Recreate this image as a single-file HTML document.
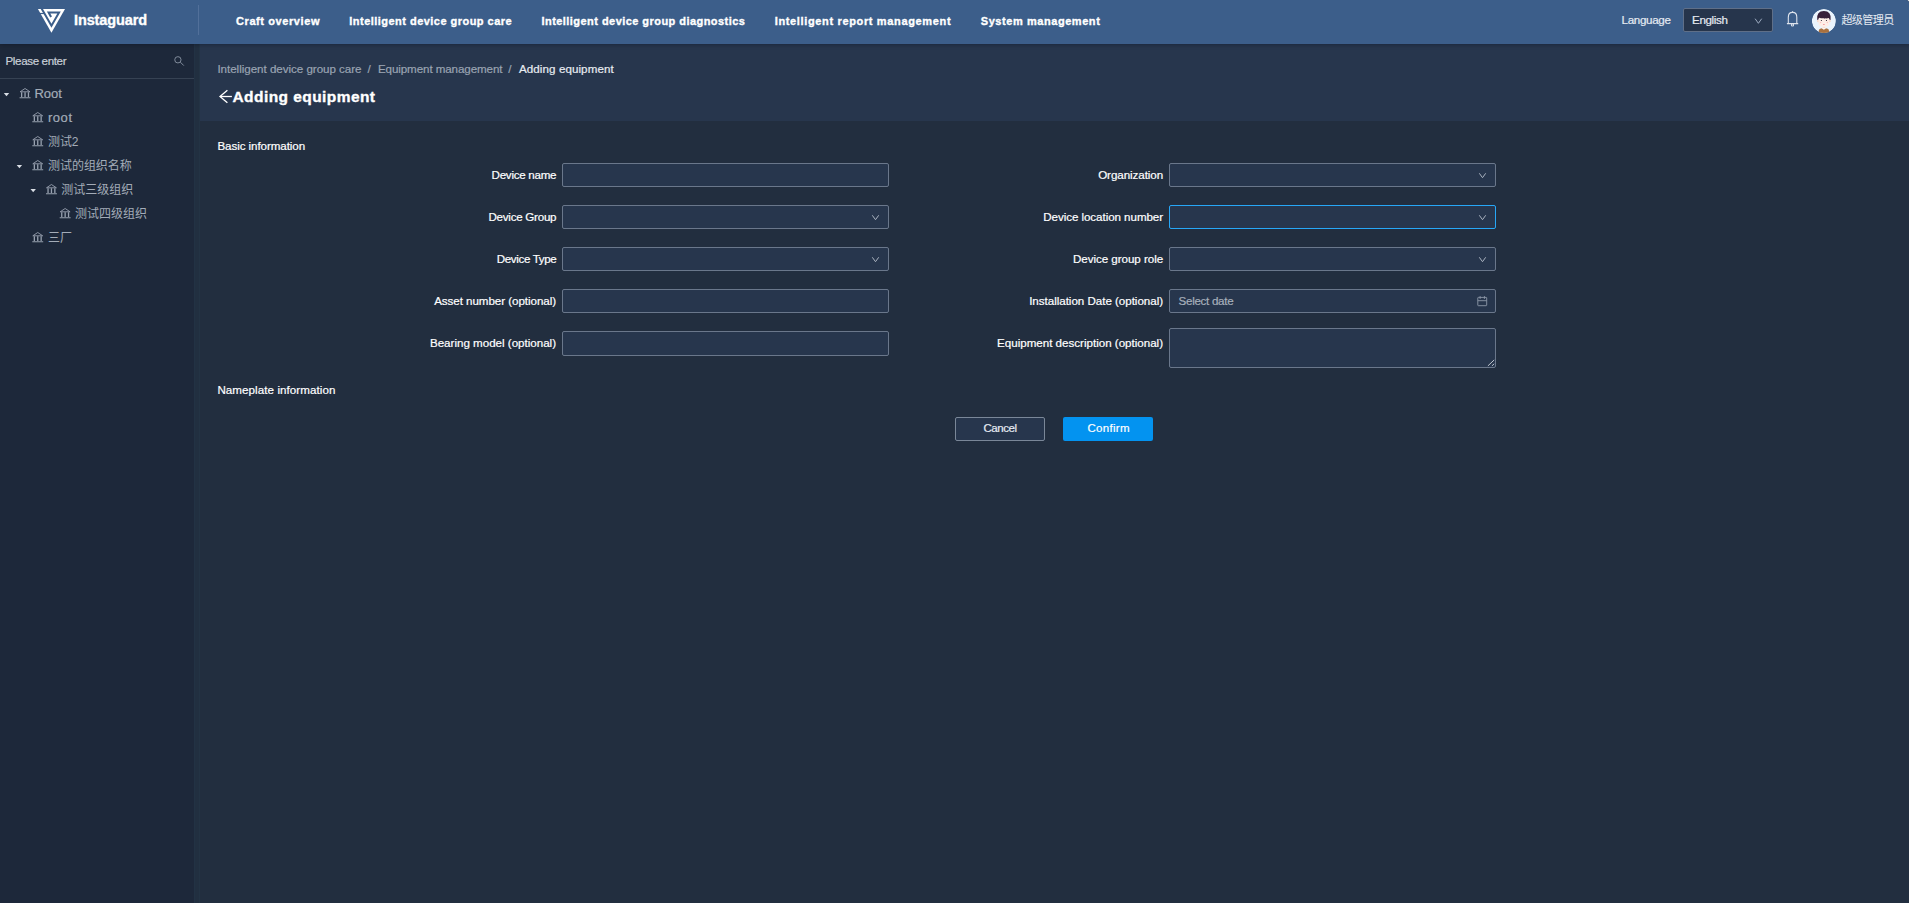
<!DOCTYPE html>
<html lang="en">
<head>
<meta charset="utf-8">
<title>Instaguard - Adding equipment</title>
<style>
html,body{margin:0;padding:0;}
body{width:1910px;height:903px;overflow:hidden;position:relative;background:#fff;
 font-family:"Liberation Sans","Noto Sans CJK SC",sans-serif;}
.abs,.t,.box{position:absolute;}
.t{-webkit-text-stroke:0.2px currentColor;z-index:4;white-space:pre;line-height:20px;height:20px;}
#app{position:absolute;left:0;top:0;width:1909px;height:903px;background:#222e3f;overflow:hidden;border-top-right-radius:3px;}
#hdr{left:0;top:0;width:1909px;height:44px;background:#3c5e8a;box-shadow:0 1px 4px rgba(0,10,25,.32);z-index:2;}
#side{left:0;top:44px;width:194px;height:859px;background:#1d283a;}
#gap{left:194px;top:44px;width:6px;height:859px;background:#212f40;box-sizing:border-box;border-left:1px solid #223244;border-right:1px solid #233344;}
#phdr{left:200px;top:44px;width:1709px;height:77px;background:#27364d;}
#sline{left:0;top:78px;width:194px;height:1px;background:#364253;}
#vdiv{z-index:3;left:198px;top:5px;width:1px;height:30px;background:#52709a;}
.in{z-index:3;position:absolute;box-sizing:border-box;border:1px solid #6a778b;border-radius:2px;background:#27364d;}
.in.focus{border-color:#27a7f7;}
.hv{-webkit-text-stroke:0.35px currentColor;}
.btn{position:absolute;box-sizing:border-box;border-radius:2px;}
svg{position:absolute;overflow:visible;}
.ns{-webkit-text-stroke:0;}

</style>
</head>
<body>
<div id="app">
<div class="box" id="hdr"></div>
<div class="box" id="side"></div>
<div class="box" id="gap"></div>
<div class="box" id="phdr"></div>
<div class="box" id="sline"></div>
<div class="box" id="vdiv"></div>
<!-- inputs left -->
<div class="in" style="left:562px;top:163px;width:327px;height:24px"></div>
<div class="in" style="left:562px;top:205px;width:327px;height:24px"></div>
<div class="in" style="left:562px;top:247px;width:327px;height:24px"></div>
<div class="in" style="left:562px;top:289px;width:327px;height:24px"></div>
<div class="in" style="left:562px;top:331px;width:327px;height:25px"></div>
<!-- inputs right -->
<div class="in" style="left:1169px;top:163px;width:327px;height:24px"></div>
<div class="in focus" style="left:1169px;top:205px;width:327px;height:24px"></div>
<div class="in" style="left:1169px;top:247px;width:327px;height:24px"></div>
<div class="in" style="left:1169px;top:289px;width:327px;height:24px"></div>
<div class="in" style="left:1169px;top:328px;width:327px;height:40px"></div>
<!-- language select -->
<div class="in" style="left:1683px;top:8px;width:90px;height:24px;background:#26354c;border-color:#5f6f88"></div>
<!-- buttons -->
<div class="btn" style="left:955px;top:417px;width:90px;height:24px;border:1px solid #7a8798;background:#27364d"></div>
<div class="btn" style="left:1063px;top:417px;width:90px;height:24px;background:#0393f0"></div>
<svg class="abs" style="left:0;top:0;z-index:3" width="1909" height="903" viewBox="0 0 1909 903"><g id="logo"><polygon points="37.9,9.1 65,9.1 51.45,32.7" fill="#fff"/><polyline points="41.44,8.3 51.45,25.8 59.06,12.5 48.6,12.5 51.1,17" fill="none" stroke="#3c5e8a" stroke-width="2" stroke-linejoin="miter" stroke-miterlimit="8"/><line x1="36" y1="13.5" x2="44.6" y2="13.5" stroke="#3c5e8a" stroke-width="1.2"/></g>
<polyline points="1755.1,18.7 1758.4,23.3 1761.7,18.7" fill="none" stroke="#9dabc0" stroke-width="1"/>
<g fill="none" stroke="#dde3ec" stroke-width="1.1"><path d="M1788.3 23.4 V17.3 C1788.3 13.9 1790 12.4 1792.55 12.4 C1795.1 12.4 1796.8 13.9 1796.8 17.3 V23.4"/><line x1="1786.9" y1="23.6" x2="1798.2" y2="23.6"/><circle cx="1792.5" cy="24.9" r="1.1"/><line x1="1792.55" y1="11.2" x2="1792.55" y2="12.2"/></g>
<defs><clipPath id="avc"><circle cx="1823.9" cy="21" r="12"/></clipPath></defs><g clip-path="url(#avc)"><circle cx="1823.9" cy="21" r="12" fill="#eaf4fd"/><path d="M1818.8 34 v-3.2 q0 -2 2 -2.3 l3.1 -0.4 l3.1 0.4 q2 0.3 2 2.3 v3.2z" fill="#a9713f"/><path d="M1822 28.4 l1.9 1.3 l1.9 -1.3 l-0.6 -0.9 h-2.6z" fill="#fff"/><rect x="1822.6" y="25" width="2.6" height="3.3" fill="#fbe0d4"/><ellipse cx="1818.1" cy="21" rx="1" ry="1.2" fill="#f9d3c2"/><ellipse cx="1829.7" cy="21" rx="1" ry="1.2" fill="#f9d3c2"/><path d="M1818.4 17 h11 v5.5 q0 4.6 -5.5 4.6 q-5.5 0 -5.5 -4.6z" fill="#fdeee7"/><path d="M1817.2 19.9 q-0.9 -8.8 6.7 -8.8 q7.6 0 6.7 8.8 l-1.2 -0.3 q-0.2 -1.2 -0.6 -1.6 q-1.8 0.6 -3.6 0.3 l-0.5 0.7 l-0.3 -0.7 q-3 0.2 -5.3 -0.5 q-0.5 0.6 -0.7 1.8z" fill="#38203a"/><circle cx="1821.4" cy="20.5" r="0.6" fill="#2b2330"/><circle cx="1826.5" cy="20.5" r="0.6" fill="#2b2330"/><circle cx="1820.6" cy="22.4" r="0.75" fill="#fbc4c4"/><circle cx="1827.3" cy="22.4" r="0.75" fill="#fbc4c4"/><ellipse cx="1823.9" cy="24.4" rx="0.9" ry="0.5" fill="#f58a8f"/></g>
<g fill="none" stroke="#808b9b" stroke-width="1"><circle cx="177.9" cy="59.8" r="3.15"/><line x1="180.4" y1="62.2" x2="183.8" y2="65.6"/></g>
<g transform="translate(19.6,87.9)" fill="none" stroke="#98a2b0" stroke-width="0.9"><path d="M0.5 3.9 L5.45 0.6 L10.4 3.9 Z" stroke-linejoin="round"/><path d="M2.05 4.3 V9 M5.45 4.3 V9 M8.85 4.3 V9" stroke-width="1.3"/><path d="M0 9.85 H10.9" stroke-width="1"/></g>
<polygon points="3.8,93.1 9.2,93.1 6.5,96.2" fill="#d9dee5"/>
<g transform="translate(32.3,111.9)" fill="none" stroke="#98a2b0" stroke-width="0.9"><path d="M0.5 3.9 L5.45 0.6 L10.4 3.9 Z" stroke-linejoin="round"/><path d="M2.05 4.3 V9 M5.45 4.3 V9 M8.85 4.3 V9" stroke-width="1.3"/><path d="M0 9.85 H10.9" stroke-width="1"/></g>
<g transform="translate(32.3,135.9)" fill="none" stroke="#98a2b0" stroke-width="0.9"><path d="M0.5 3.9 L5.45 0.6 L10.4 3.9 Z" stroke-linejoin="round"/><path d="M2.05 4.3 V9 M5.45 4.3 V9 M8.85 4.3 V9" stroke-width="1.3"/><path d="M0 9.85 H10.9" stroke-width="1"/></g>
<g transform="translate(32.3,159.9)" fill="none" stroke="#98a2b0" stroke-width="0.9"><path d="M0.5 3.9 L5.45 0.6 L10.4 3.9 Z" stroke-linejoin="round"/><path d="M2.05 4.3 V9 M5.45 4.3 V9 M8.85 4.3 V9" stroke-width="1.3"/><path d="M0 9.85 H10.9" stroke-width="1"/></g>
<polygon points="16.7,165.1 22.1,165.1 19.4,168.2" fill="#d9dee5"/>
<g transform="translate(46,183.9)" fill="none" stroke="#98a2b0" stroke-width="0.9"><path d="M0.5 3.9 L5.45 0.6 L10.4 3.9 Z" stroke-linejoin="round"/><path d="M2.05 4.3 V9 M5.45 4.3 V9 M8.85 4.3 V9" stroke-width="1.3"/><path d="M0 9.85 H10.9" stroke-width="1"/></g>
<polygon points="30.5,189.1 35.9,189.1 33.2,192.2" fill="#d9dee5"/>
<g transform="translate(59.7,207.9)" fill="none" stroke="#98a2b0" stroke-width="0.9"><path d="M0.5 3.9 L5.45 0.6 L10.4 3.9 Z" stroke-linejoin="round"/><path d="M2.05 4.3 V9 M5.45 4.3 V9 M8.85 4.3 V9" stroke-width="1.3"/><path d="M0 9.85 H10.9" stroke-width="1"/></g>
<g transform="translate(32.3,231.9)" fill="none" stroke="#98a2b0" stroke-width="0.9"><path d="M0.5 3.9 L5.45 0.6 L10.4 3.9 Z" stroke-linejoin="round"/><path d="M2.05 4.3 V9 M5.45 4.3 V9 M8.85 4.3 V9" stroke-width="1.3"/><path d="M0 9.85 H10.9" stroke-width="1"/></g>
<g fill="none" stroke="#fff" stroke-width="1.3"><path d="M231.9 96.5 H220.2"/><path d="M227.4 90.3 L220 96.5 L227.4 102.7" stroke-linejoin="miter"/></g>
<polyline points="872.3,215.3 875.5,219.7 878.7,215.3" fill="none" stroke="#aab3c0" stroke-width="1"/>
<polyline points="872.3,257.3 875.5,261.7 878.7,257.3" fill="none" stroke="#aab3c0" stroke-width="1"/>
<polyline points="1479.3,173.3 1482.5,177.7 1485.7,173.3" fill="none" stroke="#aab3c0" stroke-width="1"/>
<polyline points="1479.3,215.3 1482.5,219.7 1485.7,215.3" fill="none" stroke="#aab3c0" stroke-width="1"/>
<polyline points="1479.3,257.3 1482.5,261.7 1485.7,257.3" fill="none" stroke="#aab3c0" stroke-width="1"/>
<g fill="none" stroke="#8d98a8" stroke-width="0.9"><rect x="1477.8" y="297.4" width="8.9" height="8.3" rx="0.5"/><line x1="1477.8" y1="300.7" x2="1486.7" y2="300.7"/><line x1="1480.1" y1="296.1" x2="1480.1" y2="298.9"/><line x1="1484.4" y1="296.1" x2="1484.4" y2="298.9"/></g>
<g stroke="#cfd5dd" stroke-width="0.9"><line x1="1487.9" y1="365.9" x2="1494.2" y2="359.9"/><line x1="1491.9" y1="365.9" x2="1494.2" y2="363.8"/></g></svg>
</div>

<header>
<span class="t hv" style="left:74px;top:9.5px;font-size:14.5px;letter-spacing:-0.12px;color:#ffffff;font-weight:700;">Instaguard</span>
<span class="t hv" style="left:236px;top:11px;font-size:11px;letter-spacing:0.59px;color:#ffffff;font-weight:700;">Craft overview</span>
<span class="t hv" style="left:349.3px;top:11px;font-size:11px;letter-spacing:0.47px;color:#ffffff;font-weight:700;">Intelligent device group care</span>
<span class="t hv" style="left:541.5px;top:11px;font-size:11px;letter-spacing:0.45px;color:#ffffff;font-weight:700;">Intelligent device group diagnostics</span>
<span class="t hv" style="left:774.7px;top:11px;font-size:11px;letter-spacing:0.65px;color:#ffffff;font-weight:700;">Intelligent report management</span>
<span class="t hv" style="left:980.8px;top:11px;font-size:11px;letter-spacing:0.56px;color:#ffffff;font-weight:700;">System management</span>
<span class="t" style="left:1621.6px;top:10px;font-size:11.6px;letter-spacing:-0.33px;color:#e6ebf2;">Language</span>
<span class="t" style="left:1692px;top:10px;font-size:11.6px;letter-spacing:-0.34px;color:#e6ebf2;">English</span>
<span class="t ns" style="left:1841.4px;top:10px;font-size:11px;letter-spacing:-0.53px;color:#e6ebf2;">超级管理员</span>
</header>
<aside>
<span class="t" style="left:5.5px;top:51px;font-size:11.6px;letter-spacing:-0.37px;color:#c9cfd8;">Please enter</span>
<span class="t" style="left:34.5px;top:83.5px;font-size:13px;letter-spacing:-0.06px;color:#a3acb8;">Root</span>
<span class="t" style="left:48px;top:107.5px;font-size:13px;letter-spacing:0.53px;color:#a3acb8;">root</span>
<span class="t ns" style="left:48px;top:131.5px;font-size:12px;letter-spacing:-0.09px;color:#a3acb8;">测试2</span>
<span class="t ns" style="left:48px;top:155.5px;font-size:12px;letter-spacing:-0.04px;color:#a3acb8;">测试的组织名称</span>
<span class="t ns" style="left:61.2px;top:179.5px;font-size:12px;letter-spacing:0.02px;color:#a3acb8;">测试三级组织</span>
<span class="t ns" style="left:75px;top:203.5px;font-size:12px;letter-spacing:0px;color:#a3acb8;">测试四级组织</span>
<span class="t ns" style="left:48px;top:227.5px;font-size:12px;letter-spacing:-0.02px;color:#a3acb8;">三厂</span>
</aside>
<main>
<span class="t" style="left:217.4px;top:59px;font-size:11.6px;letter-spacing:-0.03px;color:#9aa4b2;">Intelligent device group care</span>
<span class="t" style="left:367.5px;top:59px;font-size:11.6px;letter-spacing:1.27px;color:#9aa4b2;">/</span>
<span class="t" style="left:377.9px;top:59px;font-size:11.6px;letter-spacing:-0.09px;color:#9aa4b2;">Equipment management</span>
<span class="t" style="left:508.2px;top:59px;font-size:11.6px;letter-spacing:1.57px;color:#9aa4b2;">/</span>
<span class="t" style="left:519px;top:59px;font-size:11.6px;letter-spacing:0.08px;color:#e8ecf1;">Adding equipment</span>
<span class="t hv" style="left:232.5px;top:86.5px;font-size:15.5px;letter-spacing:0.43px;color:#ffffff;font-weight:700;">Adding equipment</span>
<span class="t" style="left:217.4px;top:136px;font-size:11.6px;letter-spacing:-0.07px;color:#ffffff;">Basic information</span>
<span class="t" style="left:217.4px;top:380px;font-size:11.6px;letter-spacing:0.07px;color:#ffffff;">Nameplate information</span>
<span class="t" style="right:1353.73px;top:165px;font-size:11.6px;letter-spacing:-0.27px;color:#ffffff;">Device name</span>
<span class="t" style="right:1353.74px;top:207px;font-size:11.6px;letter-spacing:-0.26px;color:#ffffff;">Device Group</span>
<span class="t" style="right:1353.64px;top:249px;font-size:11.6px;letter-spacing:-0.36px;color:#ffffff;">Device Type</span>
<span class="t" style="right:1353.95px;top:291px;font-size:11.6px;letter-spacing:-0.05px;color:#ffffff;">Asset number (optional)</span>
<span class="t" style="right:1353.99px;top:333px;font-size:11.6px;letter-spacing:-0.01px;color:#ffffff;">Bearing model (optional)</span>
<span class="t" style="right:746.93px;top:165px;font-size:11.6px;letter-spacing:-0.07px;color:#ffffff;">Organization</span>
<span class="t" style="right:746.94px;top:207px;font-size:11.6px;letter-spacing:-0.06px;color:#ffffff;">Device location number</span>
<span class="t" style="right:746.95px;top:249px;font-size:11.6px;letter-spacing:-0.05px;color:#ffffff;">Device group role</span>
<span class="t" style="right:746.97px;top:291px;font-size:11.6px;letter-spacing:-0.03px;color:#ffffff;">Installation Date (optional)</span>
<span class="t" style="right:746.99px;top:333px;font-size:11.6px;letter-spacing:-0.01px;color:#ffffff;">Equipment description (optional)</span>
<span class="t" style="left:1178.6px;top:291px;font-size:11.6px;letter-spacing:-0.3px;color:#a6afbb;">Select date</span>
<span class="t" style="left:983.5px;top:417.9px;font-size:11.5px;letter-spacing:-0.46px;color:#e6ebf2;">Cancel</span>
<span class="t" style="left:1087.5px;top:417.9px;font-size:11.5px;letter-spacing:0.29px;color:#ffffff;">Confirm</span>
</main>

</body>
</html>
